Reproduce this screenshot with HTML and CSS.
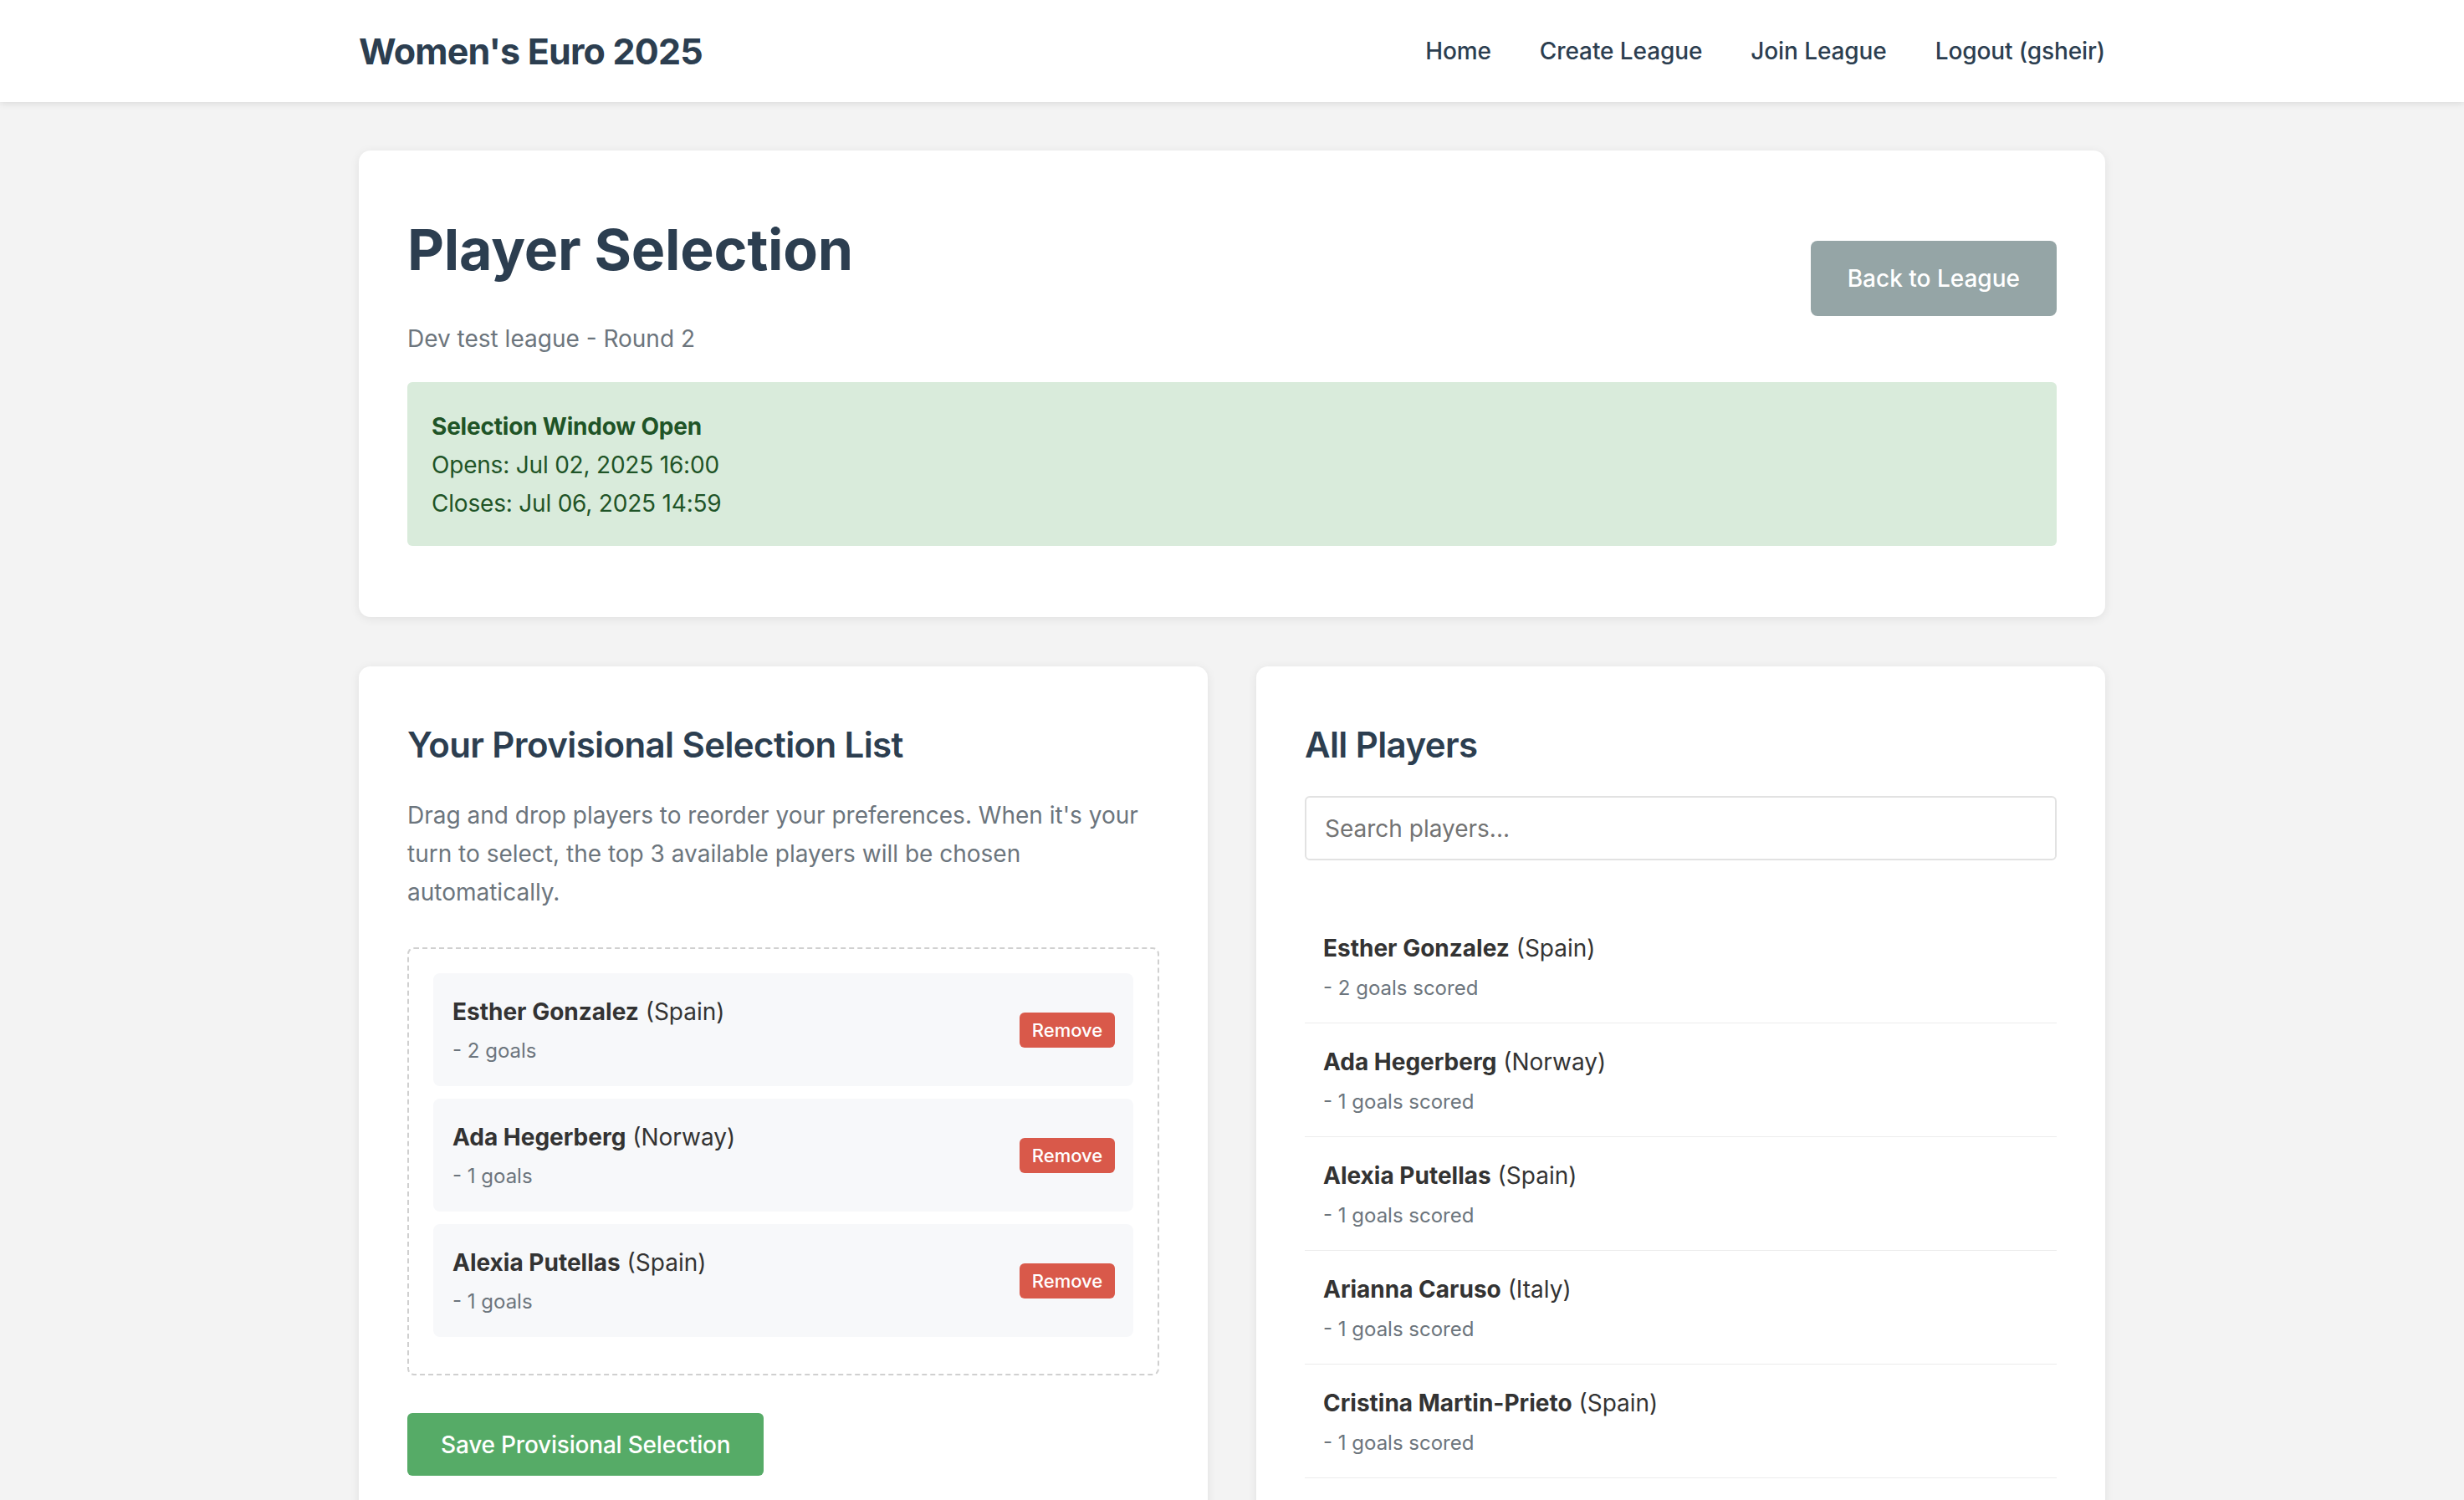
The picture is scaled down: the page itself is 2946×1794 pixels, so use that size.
FILE: index.html
```html
<!DOCTYPE html>
<html lang="en">
<head>
<meta charset="utf-8">
<title>Player Selection - Women's Euro 2025</title>
<link rel="stylesheet" href="styles.css">
</head>
<body>
<nav class="navbar">
  <div class="container nav-inner">
    <a class="brand" href="#">Women's Euro 2025</a>
    <div class="nav-links">
      <a href="#">Home</a>
      <a href="#">Create League</a>
      <a href="#">Join League</a>
      <a href="#">Logout (gsheir)</a>
    </div>
  </div>
</nav>

<main class="container main">
  <section class="card">
    <div class="header-row">
      <div class="header-text">
        <h1 class="page-title">Player Selection</h1>
        <p class="subtitle">Dev test league - Round 2</p>
      </div>
      <a class="btn btn-secondary" href="#">Back to League</a>
    </div>
    <div class="alert-success">
      <div class="alert-title">Selection Window Open</div>
      <div>Opens: Jul 02, 2025 16:00</div>
      <div>Closes: Jul 06, 2025 14:59</div>
    </div>
  </section>

  <div class="columns">
    <section class="card">
      <h2 class="section-title">Your Provisional Selection List</h2>
      <p class="help">Drag and drop players to reorder your preferences. When it's your turn to select, the top 3 available players will be chosen automatically.</p>
      <div class="drop-zone">
        <div class="sel-item">
          <div>
            <div class="p-name"><strong>Esther Gonzalez</strong> (Spain)</div>
            <div class="p-goals">- 2 goals</div>
          </div>
          <button class="btn-remove">Remove</button>
        </div>
        <div class="sel-item">
          <div>
            <div class="p-name"><strong>Ada Hegerberg</strong> (Norway)</div>
            <div class="p-goals">- 1 goals</div>
          </div>
          <button class="btn-remove">Remove</button>
        </div>
        <div class="sel-item">
          <div>
            <div class="p-name"><strong>Alexia Putellas</strong> (Spain)</div>
            <div class="p-goals">- 1 goals</div>
          </div>
          <button class="btn-remove">Remove</button>
        </div>
      </div>
      <button class="btn btn-success">Save Provisional Selection</button>
    </section>

    <section class="card">
      <h2 class="section-title">All Players</h2>
      <input class="search" type="text" placeholder="Search players...">
      <ul class="player-list">
        <li class="player-row">
          <div class="p-name"><strong>Esther Gonzalez</strong> (Spain)</div>
          <div class="p-goals">- 2 goals scored</div>
        </li>
        <li class="player-row">
          <div class="p-name"><strong>Ada Hegerberg</strong> (Norway)</div>
          <div class="p-goals">- 1 goals scored</div>
        </li>
        <li class="player-row">
          <div class="p-name"><strong>Alexia Putellas</strong> (Spain)</div>
          <div class="p-goals">- 1 goals scored</div>
        </li>
        <li class="player-row">
          <div class="p-name"><strong>Arianna Caruso</strong> (Italy)</div>
          <div class="p-goals">- 1 goals scored</div>
        </li>
        <li class="player-row">
          <div class="p-name"><strong>Cristina Martin-Prieto</strong> (Spain)</div>
          <div class="p-goals">- 1 goals scored</div>
        </li>
      </ul>
    </section>
  </div>
</main>
</body>
</html>
```

FILE: styles.css
```css
* { box-sizing: border-box; }

body {
  margin: 0;
  background: #f3f3f3;
  font-family: Inter, "Noto Sans", "Liberation Sans", sans-serif;
  color: #333333;
  font-size: 28px;
}

.container {
  width: 2088px;
  margin: 0 auto;
}

.navbar {
  background: #ffffff;
  height: 122px;
  box-shadow: 0 2px 8px rgba(0, 0, 0, 0.10);
}

.nav-inner {
  height: 100%;
  display: flex;
  align-items: center;
  justify-content: space-between;
}

.brand {
  font-size: 43px;
  font-weight: 700;
  color: #2c3e50;
  text-decoration: none;
  letter-spacing: -0.8px;
}

.nav-links {
  display: flex;
  gap: 58px;
}

.nav-links a {
  color: #2c3e50;
  text-decoration: none;
  font-size: 28px;
  font-weight: 500;
  letter-spacing: -0.1px;
}

.main {
  padding-top: 58px;
}

.card {
  background: #ffffff;
  border-radius: 14px;
  box-shadow: 0 2px 12px rgba(0, 0, 0, 0.08);
  padding: 58px;
}

.header-row {
  display: flex;
  justify-content: space-between;
  align-items: center;
}

.page-title {
  margin: 19px 0 49px;
  font-size: 68px;
  font-weight: 700;
  color: #2c3e50;
  line-height: 82px;
  letter-spacing: -0.2px;
}

.subtitle {
  margin: 0;
  color: #6c757d;
  font-size: 28px;
  line-height: 34px;
}

.btn {
  display: inline-flex;
  align-items: center;
  justify-content: center;
  border: none;
  color: #ffffff;
  font-family: inherit;
  font-size: 28px;
  font-weight: 500;
  text-decoration: none;
  cursor: pointer;
}

.btn-secondary {
  background: #95a5a6;
  height: 90px;
  padding: 0 44px;
  border-radius: 8px;
  margin-top: 6px;
}

.alert-success {
  margin: 35px 0 27px;
  background: #d9ebdb;
  color: #1f5427;
  border-radius: 6px;
  padding: 30px 29px 28px;
  font-size: 28px;
  line-height: 46px;
  letter-spacing: -0.2px;
}

.alert-title {
  font-weight: 700;
}

.columns {
  margin-top: 59px;
  display: grid;
  grid-template-columns: 1fr 1fr;
  gap: 58px;
}

.section-title {
  margin: 10px 0 36px;
  font-size: 42px;
  font-weight: 600;
  line-height: 51px;
  color: #2c3e50;
  letter-spacing: -0.6px;
}

.help {
  margin: 0 0 43px;
  color: #6c757d;
  font-size: 28px;
  line-height: 46px;
}

.drop-zone {
  border: 2px dashed #d0d0d0;
  border-radius: 8px;
  padding: 29px 29px 29px;
}

.sel-item {
  display: flex;
  justify-content: space-between;
  align-items: center;
  background: #f7f8fa;
  border-radius: 8px;
  padding: 29px 22px 28px 23px;
  margin-bottom: 15px;
}

.p-name {
  font-size: 28px;
  line-height: 34px;
  color: #333333;
}

.p-name strong {
  font-weight: 700;
}

.p-goals {
  margin-top: 15px;
  font-size: 24px;
  line-height: 29px;
  color: #6c757d;
}

.btn-remove {
  background: #d9594a;
  color: #ffffff;
  border: none;
  border-radius: 6px;
  height: 42px;
  width: 114px;
  padding: 0;
  font-family: inherit;
  font-size: 22px;
  font-weight: 500;
  cursor: pointer;
}

.btn-success {
  margin-top: 45px;
  background: #56ab67;
  height: 75px;
  padding: 0 40px;
  border-radius: 6px;
  letter-spacing: -0.2px;
}

.search {
  display: block;
  width: 100%;
  height: 77px;
  border: 2px solid #e2e2e2;
  border-radius: 6px;
  padding: 0 22px;
  font-family: inherit;
  font-size: 28px;
  color: #333333;
  background: #ffffff;
}

.search::placeholder {
  color: #737373;
}

.player-list {
  list-style: none;
  margin: 59px 0 0;
  padding: 0;
}

.player-row {
  padding: 29px 22px 27px;
  border-bottom: 1px solid #ececec;
}

.player-row .p-goals {
  margin-top: 16px;
}
```
